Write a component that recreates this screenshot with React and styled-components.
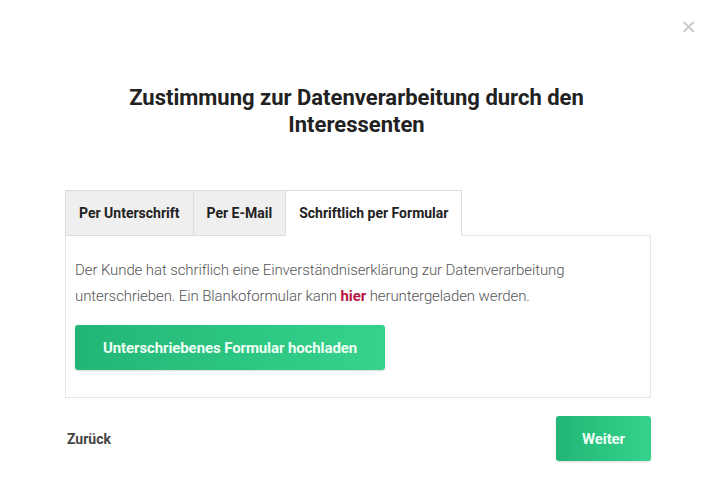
import React, { useState } from 'react'
import styled, { createGlobalStyle } from 'styled-components'

const Global = createGlobalStyle`
  html, body { margin: 0; padding: 0; background: #fff; }
  body { font-family: Roboto, "Liberation Sans", sans-serif; }
`

const tabs = ['Per Unterschrift', 'Per E-Mail', 'Schriftlich per Formular']

export default function App() {
  const [active, setActive] = useState(2)
  return <Page>
    <Global />
    <Close>×</Close>
    <Title>Zustimmung zur Datenverarbeitung durch den<br />Interessenten</Title>
    <Body>
      <TabBar>
        {tabs.map((t, i) => (
          <Tab key={t} $active={i === active} onClick={() => setActive(i)}>{t}</Tab>
        ))}
      </TabBar>
      <Panel>
        <Text>
          Der Kunde hat schriflich eine Einverständniserklärung zur Datenverarbeitung
          unterschrieben. Ein Blankoformular kann <Link>hier</Link> heruntergeladen werden.
        </Text>
        <GreenButton $wide>Unterschriebenes Formular hochladen</GreenButton>
      </Panel>
      <Footer>
        <Back>Zurück</Back>
        <GreenButton>Weiter</GreenButton>
      </Footer>
    </Body>
  </Page>
}

const Page = styled.div`
  position: relative;
  width: 711px;
  height: 487px;
  padding-top: 84px;
  box-sizing: border-box;
`

const Close = styled.div`
  position: absolute;
  top: 16px;
  right: 14px;
  font-size: 20px;
  line-height: 20px;
  color: #c8c8c8;
  font-family: "DejaVu Sans", sans-serif;
`

const Title = styled.h1`
  margin: 0;
  text-align: center;
  font-size: 22px;
  line-height: 27px;
  font-weight: 700;
  color: #222;
  padding-left: 2px;
`

const Body = styled.div`
  margin: 52px 60px 0 65px;
`

const TabBar = styled.div`
  display: flex;
`

const Tab = styled.div`
  height: 46px;
  box-sizing: border-box;
  padding: 0 13px;
  display: flex;
  align-items: center;
  font-size: 14px;
  font-weight: 700;
  color: #222;
  cursor: pointer;
  background: ${p => (p.$active ? '#fff' : '#efefef')};
  border: 1px solid #dcdcdc;
  border-bottom: ${p => (p.$active ? '1px solid #fff' : '1px solid #dcdcdc')};
  margin-bottom: -1px;
  & + & { border-left: none; }
`

const Panel = styled.div`
  border: 1px solid #e6e6e6;
  padding: 21px 9px 27px 9px;
`

const Text = styled.p`
  margin: 0;
  font-size: 15px;
  line-height: 26px;
  color: #555;
  font-weight: 300;
  letter-spacing: -0.1px;
`

const Link = styled.a`
  color: #b5173f;
  font-weight: 700;
`

const GreenButton = styled.button`
  border: none;
  border-radius: 3px;
  background: linear-gradient(90deg, #22b676 0%, #36d28c 100%);
  color: #eefff6;
  font-family: Roboto, "Liberation Sans", sans-serif;
  font-weight: 700;
  font-size: 15px;
  letter-spacing: -0.1px;
  height: 45px;
  padding: 0;
  width: ${p => (p.$wide ? '310px' : '95px')};
  margin-top: ${p => (p.$wide ? '16px' : '0')};
  box-shadow: 0 1px 2px rgba(0, 0, 0, 0.15);
  cursor: pointer;
`

const Footer = styled.div`
  display: flex;
  justify-content: space-between;
  align-items: center;
  margin-top: 18px;
`

const Back = styled.span`
  margin-left: 2px;
  font-size: 14px;
  font-weight: 700;
  color: #444;
`
